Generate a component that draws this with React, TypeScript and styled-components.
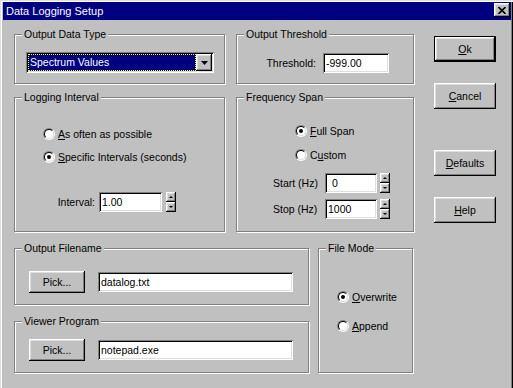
import React from 'react';
import styled, { createGlobalStyle, css } from 'styled-components';

const GlobalStyle = createGlobalStyle`
  html, body {
    margin: 0;
    padding: 0;
    background: #c0c0c0;
  }
  body {
    font-family: "Liberation Sans", Arial, sans-serif;
    font-size: 10.5px;
    line-height: 13px;
    color: #000;
  }
`;

const raised = css`
  box-shadow: inset -1px -1px 0 #000, inset 1px 1px 0 #fff,
    inset -2px -2px 0 #808080, inset 2px 2px 0 #dfdfdf;
`;

const sunken = css`
  box-shadow: inset 1px 1px 0 #808080, inset -1px -1px 0 #fff,
    inset 2px 2px 0 #000, inset -2px -2px 0 #dfdfdf;
`;

const Window = styled.div`
  box-sizing: border-box;
  width: 513px;
  height: 388px;
  padding: 2px 2px 0 3px;
  background: #c0c0c0;
  overflow: hidden;
  box-shadow: inset 1px 1px 0 #dfdfdf, inset 2px 2px 0 #fff,
    inset -1px 0 0 #000, inset -2px 0 0 #808080;
`;

const TitleBar = styled.div`
  height: 18px;
  display: flex;
  align-items: flex-start;
  justify-content: space-between;
  padding: 0 1px 0 3px;
  background: #000080;
  color: #fff;
  font-size: 11px;
  line-height: 18px;
`;

const CloseButton = styled.span`
  box-sizing: border-box;
  width: 16px;
  height: 14px;
  margin-top: 1px;
  display: flex;
  align-items: center;
  justify-content: center;
  background: #c0c0c0;
  ${raised}
`;

const Body = styled.div`
  display: flex;
  align-items: flex-start;
  padding: 14px 0 0 11px;
`;

const LeftArea = styled.div`
  display: flex;
  flex-direction: column;
  width: 400px;
`;

const TopGrid = styled.div`
  display: grid;
  grid-template-columns: 211px 178px;
  grid-template-rows: 50px 135px;
  column-gap: 11px;
  row-gap: 13px;
`;

const BottomGrid = styled.div`
  display: grid;
  grid-template-columns: 295px 95px;
  column-gap: 9px;
  margin-top: 16px;
`;

const Stack = styled.div`
  display: flex;
  flex-direction: column;
  gap: 16px;
`;

const Group = styled.div<{ $h: number; $pad: string }>`
  position: relative;
  box-sizing: border-box;
  height: ${(p) => p.$h}px;
  padding: ${(p) => p.$pad};
  border: 1px solid #808080;
  box-shadow: inset 1px 1px 0 #fff, 1px 1px 0 #fff;
`;

const Legend = styled.span`
  position: absolute;
  top: -7px;
  left: 7px;
  padding: 0 2px;
  background: #c0c0c0;
  white-space: nowrap;
`;

const Combo = styled.div`
  box-sizing: border-box;
  width: 188px;
  height: 21px;
  padding: 2px;
  display: flex;
  background: #fff;
  ${sunken}
`;

const ComboValue = styled.div`
  flex: 1;
  display: flex;
  align-items: center;
  padding-left: 2px;
  background: #000080;
  color: #fff;
  outline: 1px dotted #ffff00;
  outline-offset: -1px;
`;

const ComboButton = styled.span`
  width: 16px;
  display: flex;
  align-items: center;
  justify-content: center;
  background: #c0c0c0;
  ${raised}
`;

const FieldRow = styled.div<{ $gap: number; $end?: boolean; $mt?: number; $ml?: number }>`
  display: flex;
  align-items: center;
  gap: ${(p) => p.$gap}px;
  justify-content: ${(p) => (p.$end ? 'flex-end' : 'flex-start')};
  margin-top: ${(p) => p.$mt ?? 0}px;
  margin-left: ${(p) => p.$ml ?? 0}px;
`;

const Label = styled.span<{ $w?: number; $right?: boolean }>`
  width: ${(p) => (p.$w ? `${p.$w}px` : 'auto')};
  text-align: ${(p) => (p.$right ? 'right' : 'left')};
  white-space: nowrap;
`;

const Field = styled.input<{ $w: number; $indent?: number }>`
  box-sizing: border-box;
  width: ${(p) => p.$w}px;
  height: 20px;
  margin: 0;
  border: none;
  outline: none;
  padding: 0 0 0 ${(p) => 3 + (p.$indent ?? 0)}px;
  background: #fff;
  color: #000;
  font: inherit;
  ${sunken}
`;

const Spin = styled.div`
  display: flex;
  flex-direction: column;
  width: 10px;
  height: 20px;
`;

const SpinButton = styled.span`
  flex: 1;
  display: flex;
  align-items: center;
  justify-content: center;
  background: #c0c0c0;
  ${raised}
`;

const RadioList = styled.div<{ $gap: number; $ml?: number }>`
  display: flex;
  flex-direction: column;
  gap: ${(p) => p.$gap}px;
  margin-left: ${(p) => p.$ml ?? 0}px;
`;

const RadioRow = styled.label`
  display: flex;
  align-items: center;
  gap: 3px;
  height: 16px;
  white-space: nowrap;
`;

const RadioOuter = styled.span`
  box-sizing: border-box;
  flex: none;
  width: 12px;
  height: 12px;
  border-radius: 50%;
  border: 1px solid;
  border-color: #808080 #fff #fff #808080;
  display: flex;
`;

const RadioInner = styled.span`
  box-sizing: border-box;
  width: 10px;
  height: 10px;
  border-radius: 50%;
  border: 1px solid;
  border-color: #000 #dfdfdf #dfdfdf #000;
  background: #fff;
  display: flex;
  align-items: center;
  justify-content: center;
`;

const RadioDot = styled.span`
  width: 4px;
  height: 4px;
  border-radius: 50%;
  background: #000;
`;

const ButtonColumn = styled.div`
  display: flex;
  flex-direction: column;
  margin-left: 20px;
  padding-top: 2px;
`;

const PushButton = styled.button<{ $default?: boolean; $w?: number; $h?: number; $mt?: number }>`
  box-sizing: border-box;
  width: ${(p) => p.$w ?? 62}px;
  height: ${(p) => p.$h ?? 26}px;
  margin: ${(p) => p.$mt ?? 0}px 0 0;
  padding: 0;
  border: ${(p) => (p.$default ? '1px solid #000' : 'none')};
  background: #c0c0c0;
  color: #000;
  font: inherit;
  flex: none;
  ${raised}
`;

const Arrow = ({ down, w = 7, h = 4 }: { down?: boolean; w?: number; h?: number }) => (
  <svg width={w} height={h} viewBox={`0 0 ${w} ${h}`} style={{ display: 'block' }}>
    <polygon
      points={down ? `0,0 ${w},0 ${w / 2},${h}` : `0,${h} ${w},${h} ${w / 2},0`}
      fill="#000"
    />
  </svg>
);

const Radio = ({ checked, children }: { checked?: boolean; children: React.ReactNode }) => (
  <RadioRow>
    <RadioOuter>
      <RadioInner>{checked && <RadioDot />}</RadioInner>
    </RadioOuter>
    <span>{children}</span>
  </RadioRow>
);

const SpinBox = () => (
  <Spin>
    <SpinButton>
      <Arrow w={4} h={2} />
    </SpinButton>
    <SpinButton>
      <Arrow down w={4} h={2} />
    </SpinButton>
  </Spin>
);

export default function App() {
  return (
    <>
      <GlobalStyle />
      <Window>
        <TitleBar>
          <span>Data Logging Setup</span>
          <CloseButton>
            <svg width="8" height="7" viewBox="0 0 8 7">
              <path d="M0.5 0 L7.5 7 M7.5 0 L0.5 7" stroke="#000" strokeWidth="1.6" />
            </svg>
          </CloseButton>
        </TitleBar>

        <Body>
          <LeftArea>
            <TopGrid>
              <Group $h={50} $pad="17px 0 0 11px">
                <Legend>Output Data Type</Legend>
                <Combo>
                  <ComboValue>Spectrum Values</ComboValue>
                  <ComboButton>
                    <Arrow down />
                  </ComboButton>
                </Combo>
              </Group>

              <Group $h={50} $pad="18px 24px 0 0">
                <Legend>Output Threshold</Legend>
                <FieldRow $gap={7} $end>
                  <Label>Threshold:</Label>
                  <Field $w={66} defaultValue="-999.00" />
                </FieldRow>
              </Group>

              <Group $h={135} $pad="28px 0 0 28px">
                <Legend>Logging Interval</Legend>
                <RadioList $gap={7}>
                  <Radio>
                    <u>A</u>s often as possible
                  </Radio>
                  <Radio checked>
                    <u>S</u>pecific Intervals (seconds)
                  </Radio>
                </RadioList>
                <FieldRow $gap={4} $mt={27} $ml={11}>
                  <Label $w={41} $right>
                    Interval:
                  </Label>
                  <Field $w={63} defaultValue="1.00" />
                  <SpinBox />
                </FieldRow>
              </Group>

              <Group $h={135} $pad="25px 0 0 36px">
                <Legend>Frequency Span</Legend>
                <RadioList $gap={8} $ml={22}>
                  <Radio checked>
                    <u>F</u>ull Span
                  </Radio>
                  <Radio>
                    C<u>u</u>stom
                  </Radio>
                </RadioList>
                <FieldRow $gap={3} $mt={10}>
                  <Label $w={49}>Start (Hz)</Label>
                  <Field $w={52} $indent={4} defaultValue="0" />
                  <SpinBox />
                </FieldRow>
                <FieldRow $gap={3} $mt={6}>
                  <Label $w={49}>Stop (Hz)</Label>
                  <Field $w={52} defaultValue="1000" />
                  <SpinBox />
                </FieldRow>
              </Group>
            </TopGrid>

            <BottomGrid>
              <Stack>
                <Group $h={57} $pad="22px 0 0 14px">
                  <Legend>Output Filename</Legend>
                  <FieldRow $gap={13}>
                    <PushButton $w={56} $h={22}>
                      Pick...
                    </PushButton>
                    <Field $w={195} defaultValue="datalog.txt" />
                  </FieldRow>
                </Group>
                <Group $h={52} $pad="17px 0 0 14px">
                  <Legend>Viewer Program</Legend>
                  <FieldRow $gap={13}>
                    <PushButton $w={56} $h={22}>
                      Pick...
                    </PushButton>
                    <Field $w={195} defaultValue="notepad.exe" />
                  </FieldRow>
                </Group>
              </Stack>

              <Group $h={125} $pad="40px 0 0 18px">
                <Legend>File Mode</Legend>
                <RadioList $gap={13}>
                  <Radio checked>
                    <u>O</u>verwrite
                  </Radio>
                  <Radio>
                    <u>A</u>ppend
                  </Radio>
                </RadioList>
              </Group>
            </BottomGrid>
          </LeftArea>

          <ButtonColumn>
            <PushButton $default>
              <u>O</u>k
            </PushButton>
            <PushButton $mt={21}>
              <u>C</u>ancel
            </PushButton>
            <PushButton $mt={41}>
              <u>D</u>efaults
            </PushButton>
            <PushButton $mt={21}>
              <u>H</u>elp
            </PushButton>
          </ButtonColumn>
        </Body>
      </Window>
    </>
  );
}
